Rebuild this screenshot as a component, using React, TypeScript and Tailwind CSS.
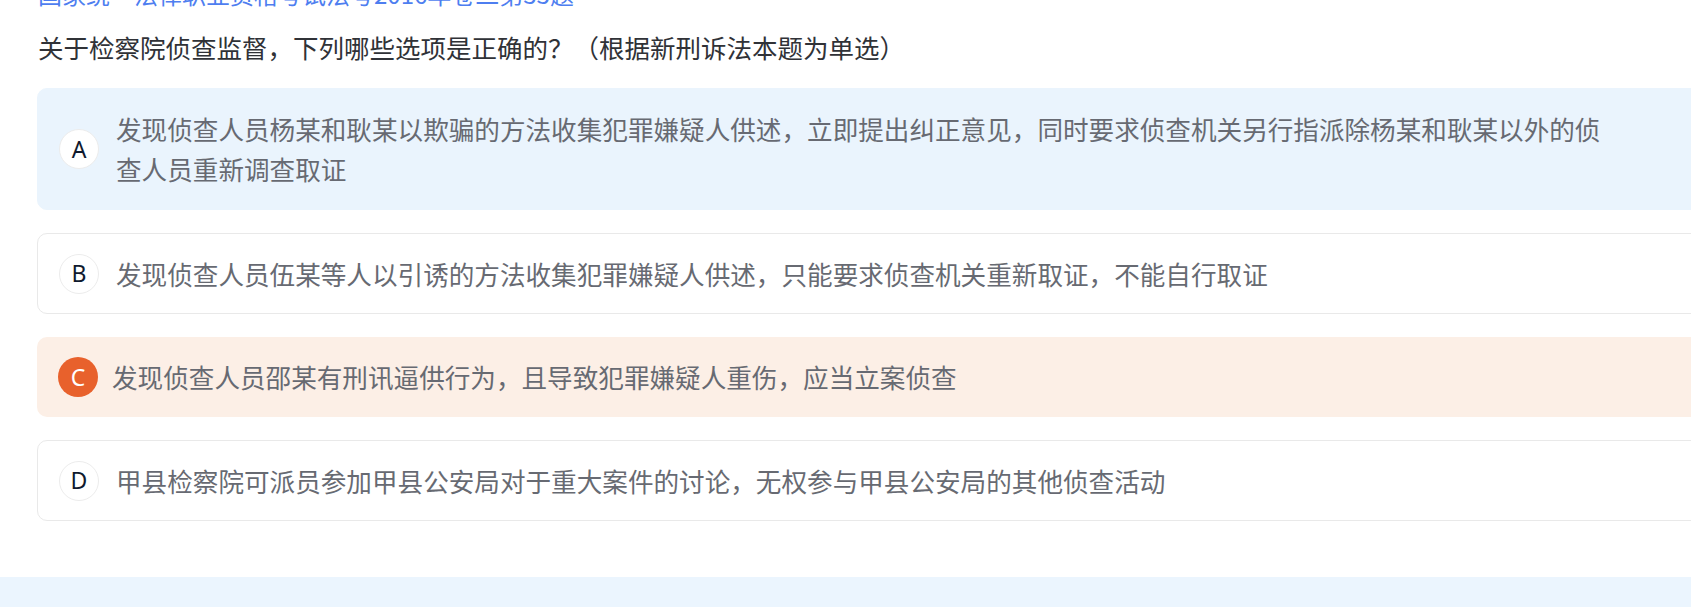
import React from "react";

// ── Option data ───────────────────────────────────────────────────────────

type Tone = "selected" | "plain" | "wrong";

const OPTIONS: { key: string; text: string; tone: Tone }[] = [
  {
    key: "A",
    text: "发现侦查人员杨某和耿某以欺骗的方法收集犯罪嫌疑人供述，立即提出纠正意见，同时要求侦查机关另行指派除杨某和耿某以外的侦查人员重新调查取证",
    tone: "selected",
  },
  {
    key: "B",
    text: "发现侦查人员伍某等人以引诱的方法收集犯罪嫌疑人供述，只能要求侦查机关重新取证，不能自行取证",
    tone: "plain",
  },
  {
    key: "C",
    text: "发现侦查人员邵某有刑讯逼供行为，且导致犯罪嫌疑人重伤，应当立案侦查",
    tone: "wrong",
  },
  {
    key: "D",
    text: "甲县检察院可派员参加甲县公安局对于重大案件的讨论，无权参与甲县公安局的其他侦查活动",
    tone: "plain",
  },
];

const CJK = "font-['Noto_Sans_CJK_SC','Noto_Sans',sans-serif]";

// ── Single option card ────────────────────────────────────────────────────

function OptionCard({ opt }: { opt: (typeof OPTIONS)[number] }) {
  const card =
    opt.tone === "selected"
      ? "bg-[#eaf4fd] border border-[#eaf4fd] py-[20px] pl-[21px]"
      : opt.tone === "wrong"
        ? "bg-[#fcefe6] h-[80px] pl-[21px]"
        : "bg-white border border-[#e9e9e9] h-[81px] pl-[21px]";

  const badge =
    opt.tone === "wrong"
      ? "bg-[#e8612c] text-white"
      : "bg-white text-[#0f1a2e] border border-[#ececec]";

  return (
    <div className={`flex items-center w-[1720px] rounded-[10px] ${card}`}>
      <div
        className={`shrink-0 w-10 h-10 rounded-full flex items-center justify-center text-[23px] font-['Noto_Sans',sans-serif] ${badge}`}
      >
        {opt.key}
      </div>
      <p
        className={`${opt.tone === "wrong" ? "ml-[14px]" : "ml-[17px]"} w-[1500px] text-[25.6px] leading-[40px] text-[#676a72] ${CJK}`}
      >
        {opt.text}
      </p>
    </div>
  );
}

// ── Page ──────────────────────────────────────────────────────────────────

export default function App() {
  return (
    <div className="w-[1691px] h-[607px] overflow-hidden bg-white flex flex-col">
      <div className="mt-[-26px] pl-[38px]">
        <div className={`h-[40px] leading-[40px] text-[24px] text-[#4e7ef0] whitespace-nowrap ${CJK}`}>
          国家统一法律职业资格考试法考2016年卷二第33题
        </div>
        <div className={`mt-[13px] h-[40px] leading-[40px] text-[25.5px] text-[#303237] whitespace-nowrap ${CJK}`}>
          关于检察院侦查监督，下列哪些选项是正确的？（根据新刑诉法本题为单选）
        </div>
      </div>

      <div className="mt-[21px] pl-[37px] flex flex-col gap-[23px]">
        {OPTIONS.map((opt) => (
          <OptionCard key={opt.key} opt={opt} />
        ))}
      </div>

      <div className="mt-auto h-[30px] bg-[#ebf5fe]" />
    </div>
  );
}
